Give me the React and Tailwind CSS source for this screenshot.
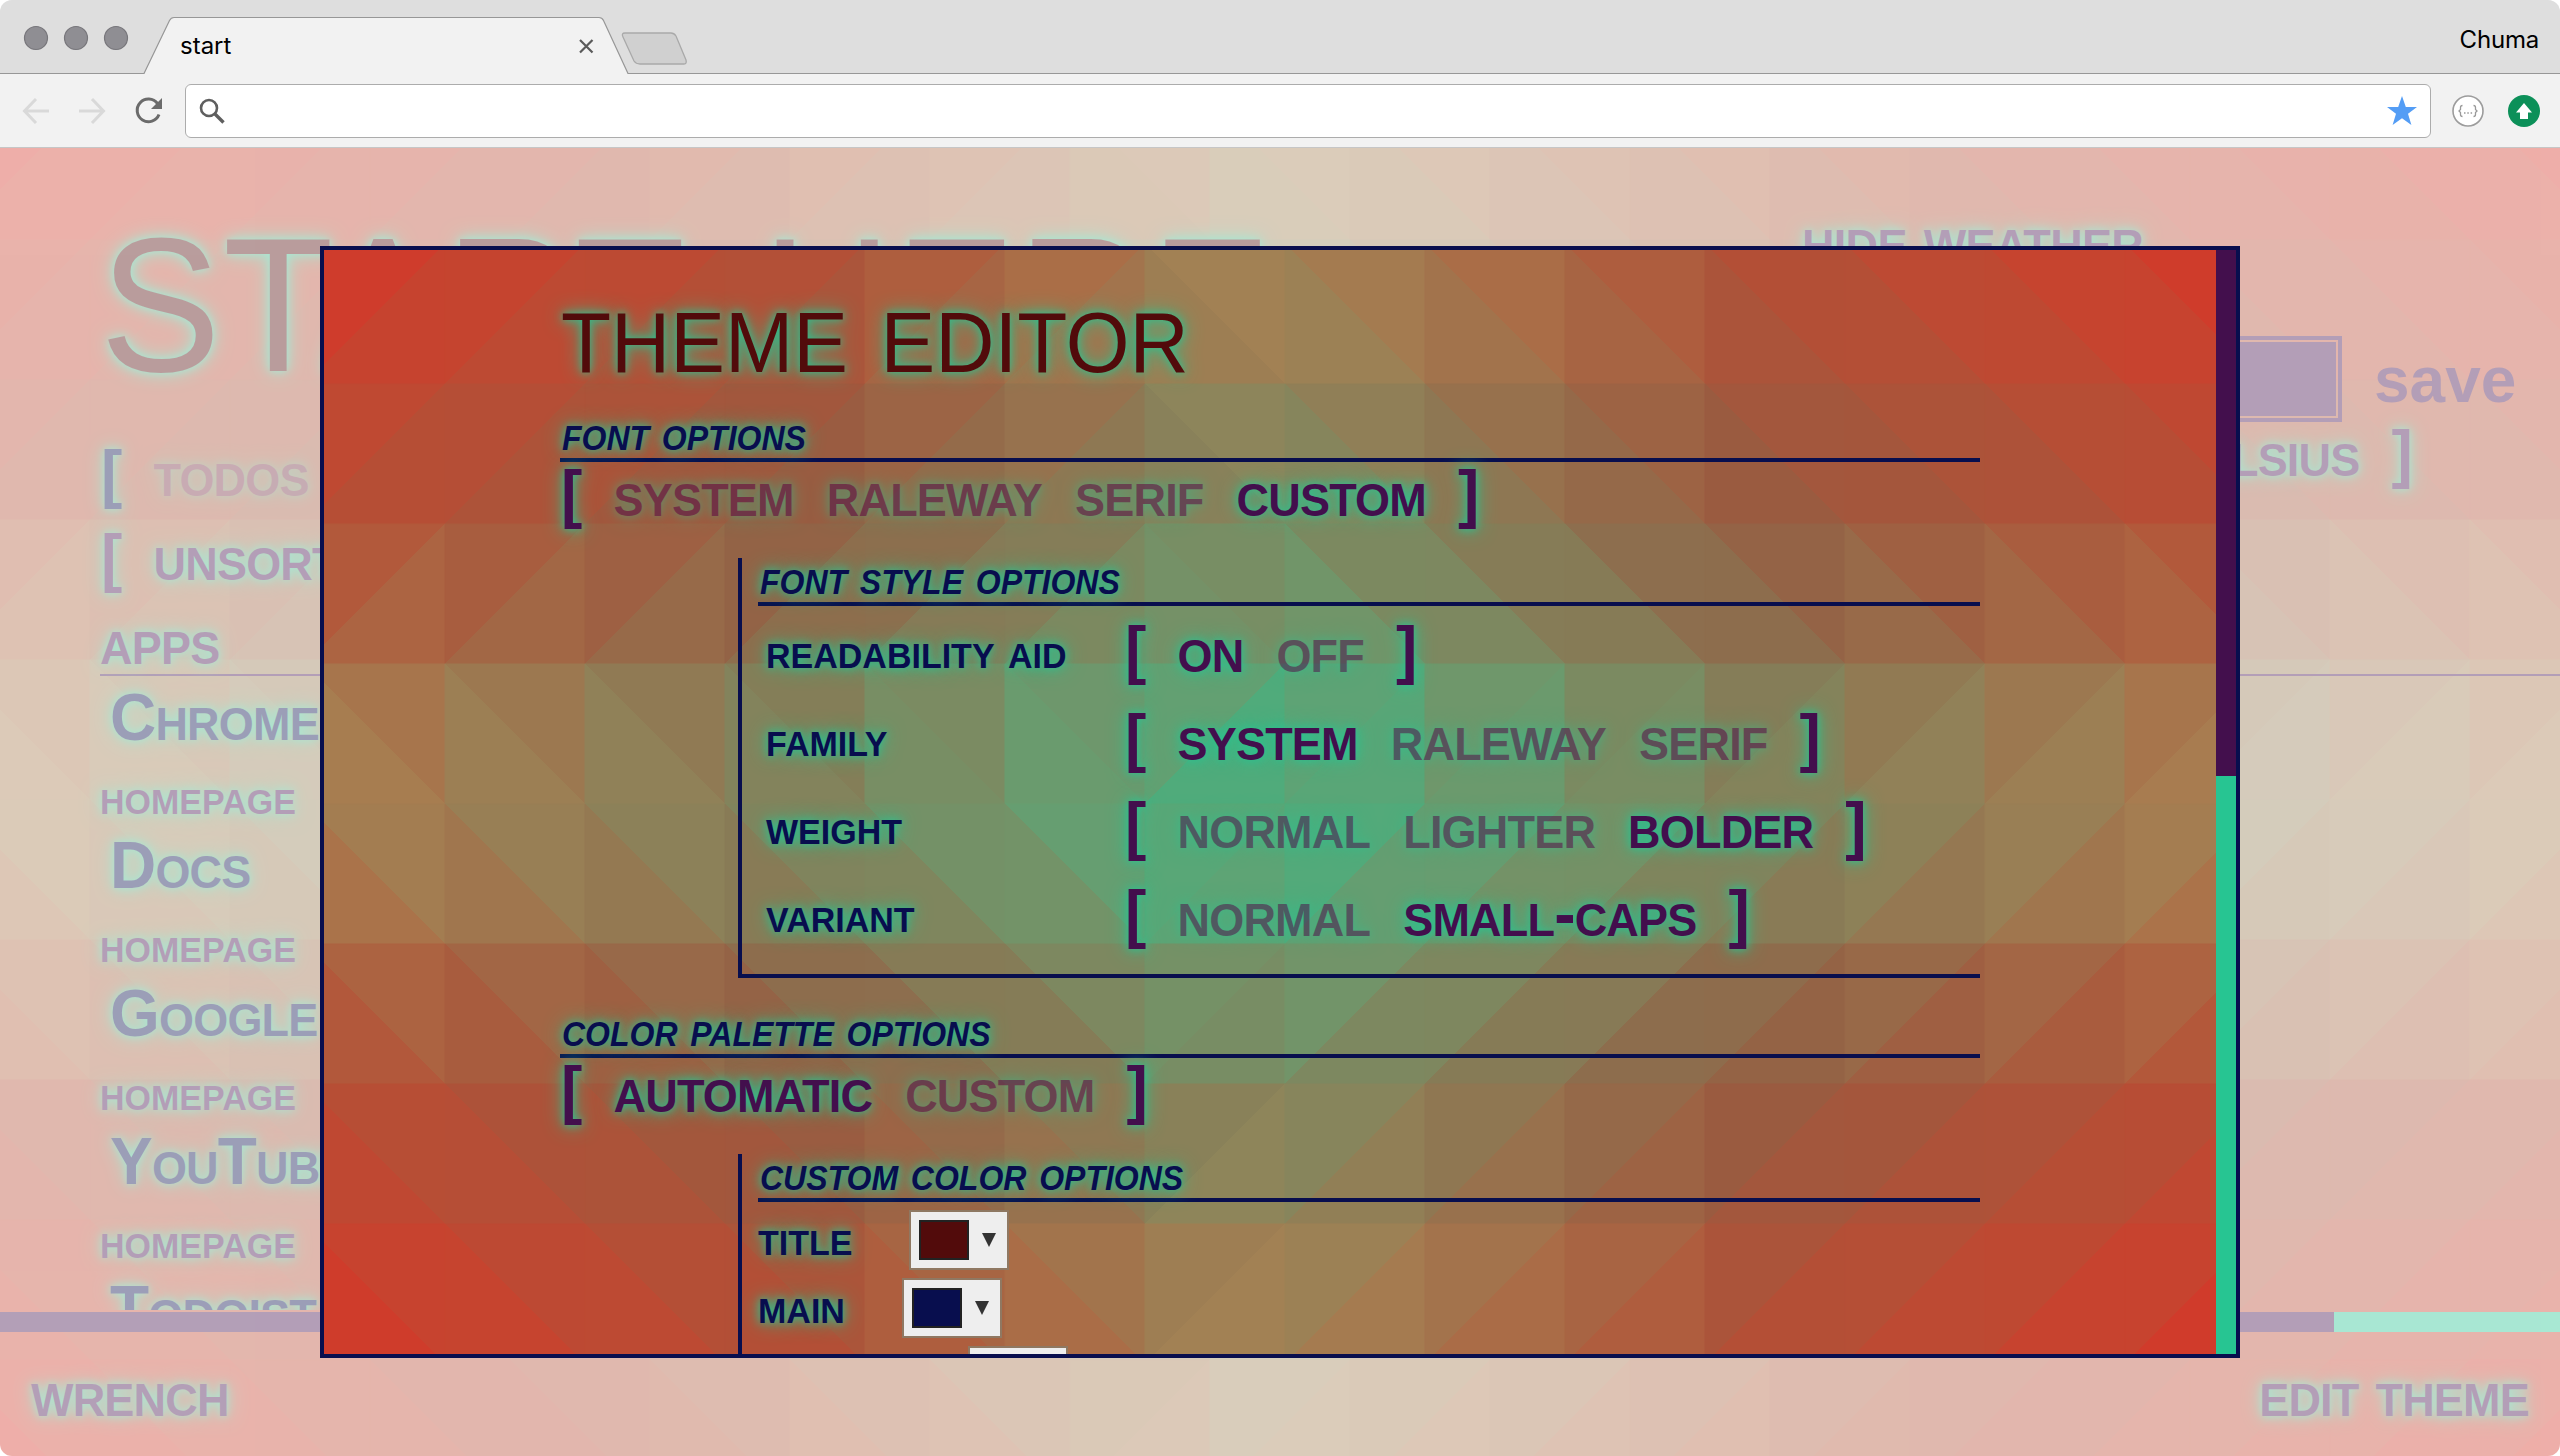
import React from "react";

/* ---------- colour helpers ---------- */
const lin = (v) => (v <= 0.04045 ? v / 12.92 : ((v + 0.055) / 1.055) ** 2.4);
const gam = (v) => (v <= 0.0031308 ? v * 12.92 : 1.055 * v ** (1 / 2.4) - 0.055);
const fwd = (t) => (t > 0.008856 ? Math.cbrt(t) : 7.787 * t + 16 / 116);
const inv = (t) => (t > 0.206893 ? t ** 3 : (t - 16 / 116) / 7.787);

function toLab([r, g, b]) {
  const [R, G, B] = [r, g, b].map((v) => lin(v / 255));
  const x = fwd((0.4124 * R + 0.3576 * G + 0.1805 * B) / 0.9505);
  const y = fwd(0.2126 * R + 0.7152 * G + 0.0722 * B);
  const z = fwd((0.0193 * R + 0.1192 * G + 0.9505 * B) / 1.089);
  return [116 * y - 16, 500 * (x - y), 200 * (y - z)];
}
function toRgb([l, a, b]) {
  const fy = (l + 16) / 116;
  const x = inv(fy + a / 500) * 0.9505;
  const y = inv(fy);
  const z = inv(fy - b / 200) * 1.089;
  return [
    3.2406 * x - 1.5372 * y - 0.4986 * z,
    -0.9689 * x + 1.8758 * y + 0.0415 * z,
    0.0557 * x - 0.204 * y + 1.057 * z,
  ].map((v) => Math.round(255 * gam(Math.min(1, Math.max(0, v)))));
}
const mix = (p, q, t) => p.map((v, i) => v + (q[i] - v) * t);

const STOPS = [
  [0, [50, 182, 132]],
  [0.5, [148, 92, 66]],
  [1, [213, 54, 41]],
].map(([t, c]) => [t, toLab(c)]);

function scale(t) {
  const v = Math.min(1, Math.abs(t));
  const i = v < 0.5 ? 0 : 1;
  return mix(STOPS[i][1], STOPS[i + 1][1], (v - STOPS[i][0]) / 0.5);
}

/* Triangulated backdrop: 140px cells, each split by a diagonal that points away from the centre. */
function Mesh({ width, height, x0, y0, flipX, flipY }) {
  const tris = [];
  const S = 140;
  for (let y = y0; y < height; y += S) {
    for (let x = x0; x < width; x += S) {
      const back = x >= flipX === y < flipY;
      const [a, b, c, d] = [[x, y], [x + S, y], [x + S, y + S], [x, y + S]];
      tris.push(...(back ? [[a, b, c], [a, c, d]] : [[a, b, d], [b, c, d]]));
    }
  }
  return (
    <svg className="absolute inset-0" width={width} height={height} aria-hidden="true">
      {tris.map((t, i) => {
        const cx = (t[0][0] + t[1][0] + t[2][0]) / 3;
        const cy = (t[0][1] + t[1][1] + t[2][1]) / 3;
        const rgb = toRgb(mix(scale((cx * 2) / width - 1), scale((cy * 2) / height - 1), 0.5));
        const fill = `rgb(${rgb.join(",")})`;
        return <polygon key={i} points={t.map((p) => p.join(",")).join(" ")} fill={fill} stroke={fill} strokeWidth="1" />;
      })}
    </svg>
  );
}

/* ---------- shared pieces ---------- */
const TALL = "origin-[0_84%] scale-y-[1.045]";

function Options({ items, active = [], bracket = "" }) {
  return (
    <div className="flex h-16 items-center pl-[1px] text-[64px] leading-[64px] font-bold tracking-[-0.8px] whitespace-nowrap text-[#430f4d] [font-variant:small-caps]">
      <span className={bracket}>[</span>
      <div className="mx-[32px] flex gap-[33px]">
        {items.map((t) => (
          <span key={t} className={`${TALL} ${active.includes(t) ? "" : "opacity-50"}`}>{t}</span>
        ))}
      </div>
      <span className={bracket}>]</span>
    </div>
  );
}

const Heading = ({ children }) => (
  <h2 className="h-12 border-b-4 border-[#080e4e] pl-[2px] text-[46px] leading-[41px] font-bold whitespace-nowrap text-[#080e4e] italic [font-variant:small-caps]">
    <span className="inline-block origin-[0_89%] scale-y-[1.07]">{children}</span>
  </h2>
);

function Picker({ color }) {
  return (
    <div className="flex h-[60px] w-[100px] shrink-0 items-center border-2 border-[#8f7862] bg-[#eeeeee] pl-2">
      <div className="h-10 w-[50px] border-2 border-[#222222]" style={{ backgroundColor: color }} />
      <svg className="ml-[13px]" width="14" height="14" viewBox="0 0 14 14">
        <path d="M0 0h14L7 14z" fill="#333" />
      </svg>
    </div>
  );
}

/* ---------- browser frame ---------- */
function BrowserBar() {
  return (
    <header className="h-[148px] bg-[#f2f2f2]">
      <div className="relative flex h-[74px] justify-between bg-[#dedede] pr-[21px]">
        <svg className="absolute inset-0" width="2560" height="74">
          <path d="M144 74L169.500 20.500Q171 17.500 174 17.500H599Q602 17.500 603.500 20.500L628 74Z" fill="#f2f2f2" />
          <path d="M0 73.500H144L169.500 20.500Q171 17.500 174 17.500H599Q602 17.500 603.500 20.500L628 73.500H2560" fill="none" stroke="#979797" strokeWidth="1.200" />
          <path d="M625 33H671Q674 33 676 36L686 60Q687 64 684 64H640Q636 64 634 61L623 37Q621 33 625 33Z" fill="#d0d0d0" stroke="#a9a9a9" strokeWidth="1.300" />
          {[36, 76, 116].map((x) => (
            <circle key={x} cx={x} cy="38" r="11.500" fill="#8f8e93" stroke="#77767b" strokeWidth="1.200" />
          ))}
          <path d="M580 40L592.500 52.500M592.500 40L580 52.500" stroke="#5a5a5a" strokeWidth="2.200" />
        </svg>
        <span className="relative pl-[180px] text-[24px] leading-[91px] text-black">start</span>
        <span className="relative text-[24px] leading-[79px] tracking-[-0.2px] text-black">Chuma</span>
      </div>
      <div className="flex h-[74px] items-center border-b border-[#c6c6c6] pr-[20px] pl-[22px]">
        <svg width="142" height="30" viewBox="0 0 142 30" fill="none">
          <g stroke="#d9d9d9" strokeWidth="3">
            <path d="M27 15H3M14 3L2.500 15L14 27" />
            <path d="M57 15H81M70 3L81.500 15L70 27" />
          </g>
          <path d="M135.500 7.500A11.300 11.300 0 1 0 137 18.500" stroke="#6b6b6b" strokeWidth="3" />
          <path d="M140 2V13H129Z" fill="#6b6b6b" />
        </svg>
        <div className="ml-[21px] flex h-[54px] flex-1 items-center justify-between rounded-[6px] border border-[#acacac] bg-white pr-[12px] pl-[13px]">
          <svg width="26" height="26" viewBox="0 0 26 26" fill="none" stroke="#5f5f5f">
            <circle cx="10" cy="10" r="8" strokeWidth="2.600" />
            <path d="M16 16L24.500 24.500" strokeWidth="3.400" />
          </svg>
          <svg width="32" height="32" viewBox="0 0 32 32" fill="#549df5">
            <path d="M16 1L19.800 12H31L22 18.800L25.400 30L16 23.300L6.600 30L10 18.800L1 12H12.200Z" />
          </svg>
        </div>
        <svg className="ml-[21px]" width="32" height="32" viewBox="0 0 32 32">
          <circle cx="16" cy="16" r="15" fill="#fff" stroke="#9c9c9c" strokeWidth="1.600" />
          <path d="M10.500 10.500Q8.500 10.500 8.500 12.500V14.500L7 16L8.500 17.500V19.500Q8.500 21.500 10.500 21.500M21.500 10.500Q23.500 10.500 23.500 12.500V14.500L25 16L23.500 17.500V19.500Q23.500 21.500 21.500 21.500" fill="none" stroke="#999" strokeWidth="1.300" />
          <path d="M12 18h1.500M15.300 18h1.500M18.600 18h1.500" stroke="#999" strokeWidth="1.500" />
        </svg>
        <svg className="ml-[24px]" width="32" height="32" viewBox="0 0 32 32">
          <circle cx="16" cy="16" r="16" fill="#0c9059" />
          <path d="M16 8L24 17.500H20V24H12V17.500H8Z" fill="#fff" />
        </svg>
      </div>
    </header>
  );
}

/* ---------- start page behind the dialog ---------- */
const GLOW = "[text-shadow:0_0_8px_#27c592,0_0_20px_#27c592]";

function StartPage() {
  const links = ["Chrome", "Docs", "Google", "YouTube", "Todoist"];
  return (
    <div className="relative h-[1308px] overflow-hidden opacity-40">
      <Mesh width={2560} height={1308} x0={-50} y0={-48} flipX={1070} flipY={500} />
      <div className={`relative flex h-full flex-col font-bold text-[#430f4d] ${GLOW}`}>
        <main className="h-[1162px] overflow-hidden pl-[100px]">
          <div className="flex h-[306px] justify-between">
            <h1 className="h-[268px] origin-[0_224px] scale-y-[1.06] text-[259px] leading-[268px] font-normal tracking-[2.2px] whitespace-nowrap text-[#520b0b] [font-variant:small-caps]">start here</h1>
            <div className="w-[760px] shrink-0 pt-[60px] text-[64px] leading-[64px] [font-variant:small-caps]">
              <div className={`pl-[2px] tracking-[-0.7px] ${TALL}`}>hide weather</div>
              <div className="mt-[64px] flex h-[86px] items-center">
                <div className="h-[86px] w-[542px] border-4 border-[#430f4d] p-[2px]">
                  <div className="h-full bg-[#430f4d]" />
                </div>
                <span className="ml-[32px] pt-[1px] [font-variant:normal] [text-shadow:none]">save</span>
              </div>
              <div className="flex w-[612px] justify-end">
                <Options items={["fahrenheit", "celsius"]} active={["celsius"]} />
              </div>
            </div>
          </div>
          <div className="-mt-[12px]">
            <Options items={["todos"]} bracket="text-[#080e4e]" />
          </div>
          <div className="mt-5">
            <Options items={["unsorted"]} active={["unsorted"]} />
          </div>
          <h2 className="mt-5 h-[66px] border-b-2 border-[#430f4d] text-[64px] leading-[64px] tracking-[-0.8px] [font-variant:small-caps]">
            <span className={`inline-block ${TALL}`}>apps</span>
          </h2>
          <ul className="[font-variant:small-caps]">
            {links.map((t) => (
              <li key={t} className="h-[148px]">
                <div className="h-[84px] origin-[0_64px] scale-y-[1.045] pl-[10px] text-[64px] leading-[84px] tracking-[-0.8px] text-[#080e4e]">{t}</div>
                <div className="h-[64px] origin-[0_54px] scale-y-[1.045] text-[48px] leading-[75px]">homepage</div>
              </li>
            ))}
          </ul>
        </main>
        <div className="mt-[2px] flex h-5 shrink-0 bg-[#27c592]">
          <div className="w-[2334px] bg-[#430f4d]" />
        </div>
        <footer className="flex h-[124px] origin-[0_84px] scale-y-[1.045] justify-between px-[31px] text-[64px] leading-[124px] tracking-[-0.8px] [font-variant:small-caps]">
          <span>wrench</span>
          <span>edit theme</span>
        </footer>
      </div>
    </div>
  );
}

/* ---------- theme editor dialog ---------- */
const STYLE_ROWS = [
  ["readability aid", ["on", "off"], "on"],
  ["family", ["system", "raleway", "serif"], "system"],
  ["weight", ["normal", "lighter", "bolder"], "bolder"],
  ["variant", ["normal", "small-caps"], "small-caps"],
];

function ThemeEditor() {
  return (
    <section className={`absolute top-[246px] left-[320px] flex h-[1112px] w-[1920px] overflow-hidden border-4 border-[#080e4e] ${GLOW}`}>
      <Mesh width={1912} height={1104} x0={-19} y0={-6} flipX={821} flipY={414} />
      <div className="relative h-[1104px] w-[1892px] shrink-0 overflow-hidden pr-[236px] pl-[236px]">
        <h1 className="h-[164px] origin-[0_122px] scale-y-[1.045] pl-[1px] text-[117px] leading-[163px] font-normal whitespace-nowrap text-[#520b0b] [font-variant:small-caps]">theme editor</h1>
        <Heading>font options</Heading>
        <Options items={["system", "raleway", "serif", "custom"]} active={["custom"]} />
        <div className="mt-8 ml-[178px] h-[420px] border-b-4 border-l-4 border-[#080e4e] pl-4">
          <Heading>font style options</Heading>
          {STYLE_ROWS.map(([label, items, on]) => (
            <div key={label} className="flex h-[88px] items-center pl-[8px]">
              <span className="w-[358px] origin-[0_64px] scale-y-[1.045] pt-[3px] text-[48px] leading-[88px] font-bold whitespace-nowrap text-[#080e4e] [font-variant:small-caps]">{label}</span>
              <Options items={items} active={[on]} />
            </div>
          ))}
        </div>
        <div className="mt-8">
          <Heading>color palette options</Heading>
        </div>
        <Options items={["automatic", "custom"]} active={["automatic"]} />
        <div className="mt-8 ml-[178px] h-[420px] border-l-4 border-[#080e4e] pl-4">
          <Heading>custom color options</Heading>
          {[["title", "#520b0b"], ["main", "#080e4e"]].map(([label, color]) => (
            <div key={label} className="flex h-[68px] items-start gap-[57px] text-[48px] leading-[74px] font-bold text-[#080e4e] [font-variant:small-caps]">
              <span className="origin-[0_54px] scale-y-[1.045]">{label}</span>
              <div className="pt-2"><Picker color={color} /></div>
            </div>
          ))}
          <div className="pt-2 pl-[210px]"><Picker color="#430f4d" /></div>
        </div>
      </div>
      <div className="relative w-5 shrink-0 bg-[#27c592]">
        <div className="h-[526px] bg-[#430f4d]" />
      </div>
    </section>
  );
}

export default function App() {
  return (
    <div className="h-[1456px] w-[2560px] bg-white font-['Liberation_Sans',sans-serif]">
      <div className="relative h-full overflow-hidden rounded-[12px]">
        <div className="font-['Inter',sans-serif]"><BrowserBar /></div>
        <StartPage />
        <ThemeEditor />
      </div>
    </div>
  );
}
